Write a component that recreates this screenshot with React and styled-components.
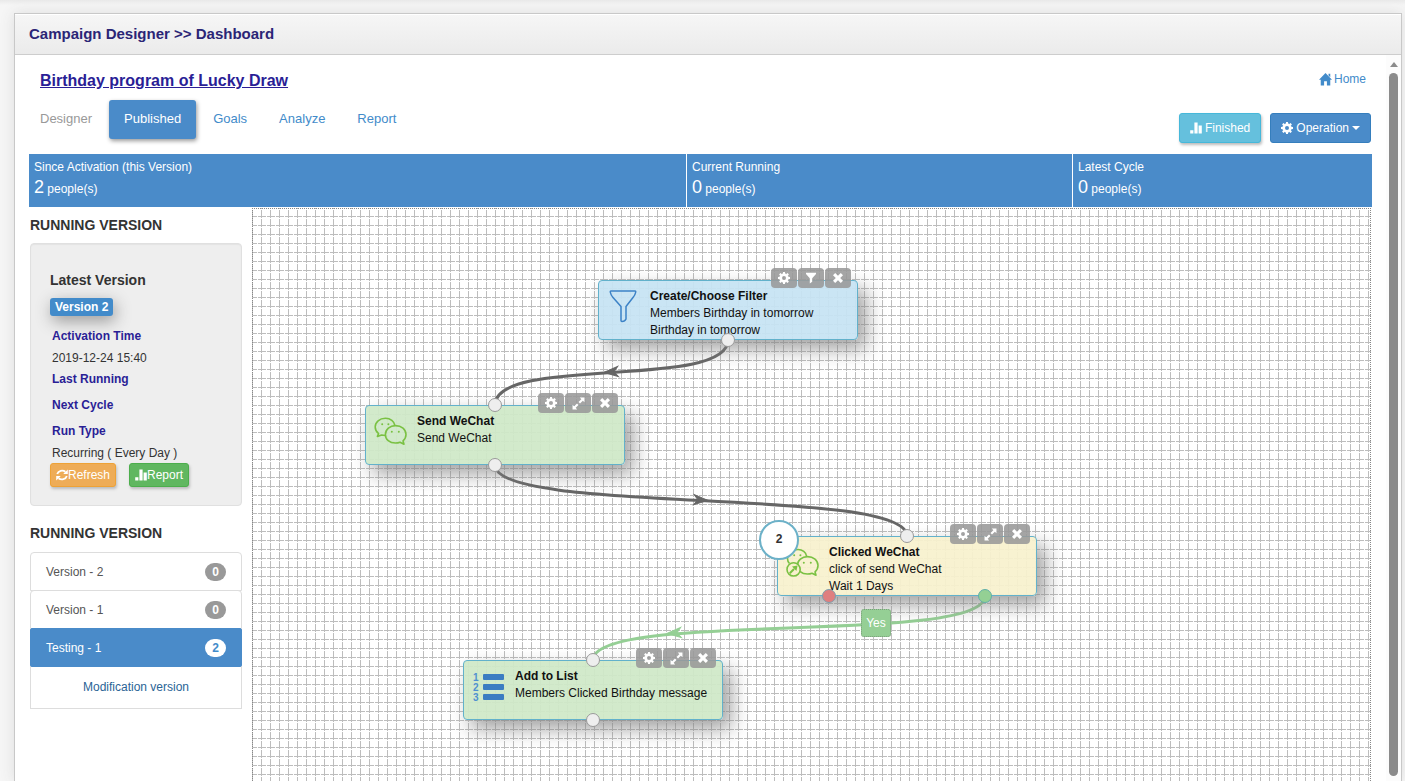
import React, { useState } from 'react';
import styled, { createGlobalStyle, css } from 'styled-components';

const GlobalStyle = createGlobalStyle`
    * { box-sizing: border-box; }
    body {
        margin: 0;
        overflow: hidden;
        background-color: #f3f3f3;
        color: #333;
        font-family: "Liberation Sans", Arial, sans-serif;
        font-size: 12px;
        line-height: 17px;
    }
    button { font-family: inherit; cursor: pointer; }
    a { color: #428bca; text-decoration: none; }
    h1, h2, h3, h4, ul, dl, dd, p { margin: 0; padding: 0; }
`;

const Page = styled.div`
    display: flex;
    height: 100vh;
    padding: 13px 3px 0 14px;
    background: linear-gradient(#e9e9e9, #f6f6f6 5px);
`;

const Panel = styled.div`
    flex: 1;
    display: flex;
    flex-direction: column;
    border: 1px solid #c8c8c8;
    border-bottom: none;
    background-color: white;
    box-shadow: 0 0 14px #ddd;
`;

const PanelHeader = styled.header`
    padding: 10px 14px;
    border-bottom: 1px solid #cdcdcd;
    background: linear-gradient(#f6f6f6, #ebebeb);
    box-shadow: inset 0 1px 0 white;

    h1 {
        font-size: 15px;
        line-height: 20px;
        color: #2b2576;
    }
`;

const PanelBody = styled.div`
    flex: 1;
    display: flex;
    min-height: 0;
`;

const Main = styled.main`
    flex: 1;
    display: flex;
    flex-direction: column;
    min-width: 0;
    padding: 16px 14px 0;
`;

const Scrollbar = styled.div`
    width: 15px;
    display: flex;
    flex-direction: column;
    align-items: center;
    gap: 6px;
    padding: 7px 0 5px;
    background-color: #fcfcfc;
`;

const ScrollArrow = styled.div`
    border: 4px solid transparent;
    border-top: none;
    border-bottom: 5px solid #8b8b8b;
`;

const ScrollThumb = styled.div`
    flex: 1;
    width: 9px;
    border-radius: 5px;
    background-color: #8b8b8b;
`;

const Head = styled.div`
    display: flex;
    justify-content: space-between;
    padding: 0 1px 11px 11px;
`;

const Title = styled.h2`
    font-size: 16px;
    line-height: 20px;
    color: #2a1e96;
    text-decoration: underline;
`;

const Tabs = styled.nav`
    display: flex;
    gap: 2px;
    margin: 9px 0 0 -15px;
`;

const Tab = styled.a`
    padding: 9px 15px 11px;
    border-radius: 3px;
    font-size: 13px;
    line-height: 19px;
    color: ${props => props.$muted ? '#999' : '#428bca'};

    ${props => props.$active && css`
        color: white;
        background-color: #4a8bc9;
        box-shadow: 1px 2px 4px #999;
    `}
`;

const HeadRight = styled.div`
    display: flex;
    flex-direction: column;
    align-items: flex-end;
    gap: 25px;
`;

const HomeLink = styled.a`
    display: flex;
    align-items: center;
    gap: 2px;
    padding-right: 5px;
`;

const ButtonRow = styled.div`
    display: flex;
    gap: ${props => props.$gap};
`;

const buttonColors = {
    info: ['#65c0dd', '#46b8da'],
    primary: ['#4a8bc9', '#357ebd'],
    warning: ['#eeac57', '#eea236'],
    success: ['#60b760', '#4cae4c'],
};

const Button = styled.button`
    display: flex;
    align-items: center;
    gap: ${props => props.$small ? '0' : '3px'};
    padding: ${props => props.$small ? '2px 5px' : '5px 10px'};
    border: 1px solid ${props => buttonColors[props.$kind][1]};
    border-radius: 3px;
    background-color: ${props => buttonColors[props.$kind][0]};
    box-shadow: ${props => props.$raised ? '1px 2px 3px #bbb' : 'none'};
    color: white;
    font-size: 12px;
    line-height: 18px;
`;

const Caret = styled.span`
    border: 4px solid transparent;
    border-top-color: white;
    border-bottom: none;
`;

const Stats = styled.section`
    display: flex;
    gap: 1px;
`;

const Stat = styled.div`
    flex: ${props => props.$share} 1 0;
    padding: 4px 5px;
    background-color: #4a8bc9;
    color: white;

    p { line-height: 18px; }
    p + p { line-height: 27px; }
    strong { font-size: 18px; font-weight: 400; line-height: 18px; }
`;

const Columns = styled.div`
    flex: 1;
    display: flex;
    gap: 10px;
    min-height: 0;
    padding: 1px 1px 0;
`;

const Sidebar = styled.aside`
    width: 212px;
    flex: none;
`;

const SideTitle = styled.h3`
    padding: 9px 0;
    font-size: 14px;
    line-height: 17px;
`;

const Well = styled.div`
    margin-bottom: 10px;
    padding: 27px 19px 18px;
    border: 1px solid #e0e0e0;
    border-radius: 4px;
    background-color: #eee;
    box-shadow: inset 0 1px 1px #e3e3e3;

    h4 { font-size: 14px; line-height: 18px; }
`;

const VersionLabel = styled.span`
    display: inline-block;
    margin: 9px 0 12px;
    padding: 0 5px;
    border-radius: 3px;
    background-color: #428bca;
    box-shadow: 2px 5px 16px #999;
    color: white;
    font-weight: 700;
    line-height: 18px;
`;

const Facts = styled.dl`
    padding-left: 2px;

    dt { margin-bottom: 5px; font-weight: 700; color: #2a1e96; }
    dd { padding-bottom: 4px; }
    dd:last-child { padding-bottom: 1px; }
`;

const VersionList = styled.ul`
    margin-top: 1px;
    list-style: none;
`;

const VersionItem = styled.button`
    display: flex;
    justify-content: space-between;
    align-items: center;
    width: 100%;
    height: 39px;
    margin-bottom: -1px;
    padding: 0 15px;
    border: 1px solid ${props => props.$active ? '#4a8bc9' : '#ddd'};
    border-radius: ${props => props.$active ? '2px' : '4px 4px 0 0'};
    background-color: ${props => props.$active ? '#4a8bc9' : 'white'};
    color: ${props => props.$active ? 'white' : '#555'};
    font-size: 12px;
    position: relative;
    z-index: ${props => props.$active ? 1 : 0};
`;

const Count = styled.span`
    padding: 0 7px;
    border-radius: 9px;
    background-color: ${props => props.$active ? 'white' : '#999'};
    color: ${props => props.$active ? '#428bca' : 'white'};
    font-weight: 700;
    line-height: 18px;
`;

const ListFooter = styled.div`
    padding: 13px 12px 12px;
    border: 1px solid #ddd;
    border-top: none;
    text-align: center;

    a { color: #2a6496; }
`;

const Canvas = styled.section`
    flex: 1;
    position: relative;
    overflow: hidden;
    border: 1px dotted #888;
    border-bottom: none;
    background-image:
        linear-gradient(white 1px, transparent 1px),
        linear-gradient(to right, transparent 4px, white 4px, white 5px, transparent 5px),
        linear-gradient(to right, transparent 8px, #bdbdbd 8px),
        linear-gradient(transparent 7px, #bdbdbd 7px, #bdbdbd 8px, transparent 8px);
    background-size: 9px 9px;
`;

const Wires = styled.svg`
    position: absolute;
    top: 0;
    left: 0;
    width: 100%;
    height: 100%;
`;

const nodeColors = {
    blue: 'rgba(198, 227, 243, 0.93)',
    green: 'rgba(207, 232, 199, 0.93)',
    yellow: 'rgba(248, 241, 206, 0.93)',
};

const Node = styled.article`
    position: absolute;
    left: ${props => props.$x}px;
    top: ${props => props.$y}px;
    display: flex;
    width: 260px;
    height: 60px;
    padding: 7px 8px;
    border: 1px solid #62b1cb;
    border-radius: 4px;
    background-color: ${props => nodeColors[props.$color]};
    box-shadow: 8px 9px 19px rgba(130, 130, 130, 0.75);
    color: #111;
`;

const NodeIcon = styled.div`
    width: 43px;
    flex: none;
`;

const NodeTools = styled.div`
    position: absolute;
    top: -13px;
    right: 6px;
    display: flex;
    gap: 1px;
`;

const ToolButton = styled.button`
    display: flex;
    align-items: center;
    justify-content: center;
    width: 26px;
    height: 20px;
    padding: 0;
    border: none;
    border-radius: 4px;
    background-color: rgba(153, 153, 153, 0.88);
    color: white;
`;

const portColors = {
    plain: ['#eee', '#999'],
    red: ['#df7f7f', '#7e9fae'],
    green: ['#94d094', '#5fb0a8'],
};

const Port = styled.span`
    position: absolute;
    left: ${props => props.$x - 8}px;
    top: ${props => props.$bottom ? 52 : -8}px;
    width: 14px;
    height: 14px;
    border: 1px solid ${props => portColors[props.$kind][1]};
    border-radius: 50%;
    background-color: ${props => portColors[props.$kind][0]};
`;

const Bubble = styled.span`
    position: absolute;
    top: -17px;
    left: -19px;
    width: 40px;
    height: 40px;
    border: 2px solid #6cb1c8;
    border-radius: 50%;
    background-color: white;
    color: #333;
    font-weight: 700;
    line-height: 34px;
    text-align: center;
`;

const WireLabel = styled.span`
    position: absolute;
    left: 608px;
    top: 400px;
    width: 30px;
    height: 28px;
    border: 1px dotted #7a9c7a;
    border-radius: 3px;
    background-color: #95cf95;
    color: white;
    line-height: 26px;
    text-align: center;
`;

const Glyph = ({ size = 12, children }) => (
    <svg width={size} height={size} viewBox="0 0 12 12" fill="currentColor" aria-hidden="true">{children}</svg>
);

const HomeIcon = () => (
    <Glyph size={13}><path d="M6 0 L12 6.2 H10.4 V11.5 H7.3 V7.6 H4.7 V11.5 H1.6 V6.2 H0 Z M8.8 0.6 H10.4 V4 L8.8 2.4 Z" /></Glyph>
);

const StatsIcon = () => (
    <Glyph><path d="M0.2 8.2 H3.4 V11.5 H0.2 Z M4.4 0.5 H7.6 V11.5 H4.4 Z M8.6 3.6 H11.8 V11.5 H8.6 Z" /></Glyph>
);

const CogIcon = () => (
    <Glyph>
        <circle cx="6" cy="6" r="3.3" fill="none" stroke="currentColor" strokeWidth="2.6" />
        {[0, 45, 90, 135].map(angle => (
            <path key={angle} transform={`rotate(${angle} 6 6)`} d="M4.7 2 L5.1 0 H6.9 L7.3 2 Z M4.7 10 L5.1 12 H6.9 L7.3 10 Z" />
        ))}
    </Glyph>
);

const FilterIcon = () => (
    <Glyph><path d="M1 0.8 H11 V2 L7.2 6.2 V9.8 L4.8 11.4 V6.2 L1 2 Z" /></Glyph>
);

const ResizeIcon = () => (
    <Glyph size={13}>
        <path d="M7.2 0.5 H11.5 V4.8 L10 3.4 L7.4 6 L6 4.6 L8.6 2 Z M0.5 7.2 L2 8.6 L4.6 6 L6 7.4 L3.4 10 L4.8 11.5 H0.5 Z" />
    </Glyph>
);

const RemoveIcon = () => (
    <Glyph><path d="M3.2 1 L6 3.8 L8.8 1 L11 3.2 L8.2 6 L11 8.8 L8.8 11 L6 8.2 L3.2 11 L1 8.8 L3.8 6 L1 3.2 Z" /></Glyph>
);

const RefreshIcon = () => (
    <Glyph>
        <path d="M1.2 5 A5 4.6 0 0 1 9.4 2.8 M10.8 7 A5 4.6 0 0 1 2.6 9.2" fill="none" stroke="currentColor" strokeWidth="1.8" />
        <path d="M11.8 0.6 V5 H7.2 Z M0.2 11.4 V7 H4.8 Z" />
    </Glyph>
);

const FunnelDrawing = () => (
    <svg width="32" height="36" viewBox="0 0 32 36" fill="none" stroke="#3c82c6" strokeWidth="1.5" strokeLinejoin="round">
        <path d="M4 3 H28 Q29 3 28.6 4.5 Q28.2 7 26 9.5 L19 18.5 V31 Q18 33.5 15 33.5 Q14 33.5 14 32.5 V18.5 L6 9.5 Q3.8 7 3.4 4.5 Q3 3 4 3 Z" />
    </svg>
);

const WeChatDrawing = ({ clicked }) => (
    <svg width="34" height="34" viewBox="0 0 34 34" fill="none" stroke="#7ac143" strokeWidth="1.6" strokeLinejoin="round">
        {clicked
            ? <path d="M20.5 12 C20 8.5 16.5 5.5 12 5.5 C6 5.5 1.5 9 1.5 14.5 C1.5 16.5 2 18 3.5 19.5" />
            : <path d="M20.8 12.4 C20.3 8.5 16.5 5.3 11.5 5.3 C5.5 5.3 1.2 9 1.2 14 C1.2 17 2.5 19 4.6 20.6 L3.4 23.4 L7.6 22 L11.4 22.5" />}
        <path d="M21.5 12.6 C16 12.6 11.4 16.3 11.4 21.4 C11.4 26.5 15.6 30 21.4 30 C23.2 30 24.6 29.8 26 29.2 L30 31.2 L29 27.8 C31 26.2 32 24 32 21.6 C32 16.5 27.5 12.6 21.5 12.6 Z" />
        <g fill="#7ac143" stroke="none">
            <circle cx="8.2" cy="11.2" r="1" />
            <circle cx="14.4" cy="11.2" r="1" />
            <circle cx="17.8" cy="18.8" r="1" />
            <circle cx="24.8" cy="18.8" r="1" />
        </g>
        {clicked && (
            <g>
                <circle cx="7.6" cy="25.4" r="6.6" fill="#f9f0ce" />
                <path d="M3.8 29.2 L8 25" strokeWidth="2" />
                <path d="M11.6 21.4 L10.4 27 L6 22.6 Z" fill="#7ac143" stroke="none" />
            </g>
        )}
    </svg>
);

const ListDrawing = () => (
    <svg width="34" height="36" viewBox="0 0 34 36" fill="#3b7dc2">
        {[1, 2, 3].map(n => (
            <g key={n}>
                <text x="1" y={n * 10 + 3} fontSize="10" fontWeight="700" fill="#4f90d0">{n}</text>
                <rect x="11" y={n * 10 - 4} width="21" height="6" rx="1" />
            </g>
        ))}
    </svg>
);

const Arrow = ({ x, y, angle, color }) => (
    <path d="M7 0 L-7 -5 L-3 0 L-7 5 Z" fill={color} stroke={color} transform={`translate(${x} ${y}) rotate(${angle})`} />
);

// shares are the widths left after each cell's padding
const stats = [
    { name: 'Since Activation (this Version)', count: 2, share: 647 },
    { name: 'Current Running', count: 0, share: 375 },
    { name: 'Latest Cycle', count: 0, share: 289 },
];

const versions = [
    { name: 'Version - 2', count: 0 },
    { name: 'Version - 1', count: 0 },
    { name: 'Testing - 1', count: 2 },
];

const nodes = [
    {
        x: 345, y: 71, color: 'blue', icon: <FunnelDrawing />, filter: true,
        title: 'Create/Choose Filter', lines: ['Members Birthday in tomorrow', 'Birthday in tomorrow'],
        ports: [{ x: 130, bottom: true, kind: 'plain' }],
    },
    {
        x: 112, y: 196, color: 'green', icon: <WeChatDrawing />,
        title: 'Send WeChat', lines: ['Send WeChat'],
        ports: [{ x: 130, kind: 'plain' }, { x: 130, bottom: true, kind: 'plain' }],
    },
    {
        x: 524, y: 327, color: 'yellow', icon: <WeChatDrawing clicked />, bubble: 2,
        title: 'Clicked WeChat', lines: ['click of send WeChat', 'Wait 1 Days'],
        ports: [{ x: 130, kind: 'plain' }, { x: 52, bottom: true, kind: 'red' }, { x: 208, bottom: true, kind: 'green' }],
    },
    {
        x: 210, y: 451, color: 'green', icon: <ListDrawing />,
        title: 'Add to List', lines: ['Members Clicked Birthday message'],
        ports: [{ x: 130, kind: 'plain' }, { x: 130, bottom: true, kind: 'plain' }],
    },
];

const CampaignNode = ({ node }) => (
    <Node $x={node.x} $y={node.y} $color={node.color}>
        <NodeIcon>{node.icon}</NodeIcon>
        <div>
            <strong>{node.title}</strong>
            {node.lines.map(line => <p key={line}>{line}</p>)}
        </div>
        <NodeTools>
            <ToolButton aria-label="Settings"><CogIcon /></ToolButton>
            <ToolButton aria-label={node.filter ? 'Filter' : 'Expand'}>
                {node.filter ? <FilterIcon /> : <ResizeIcon />}
            </ToolButton>
            <ToolButton aria-label="Remove"><RemoveIcon /></ToolButton>
        </NodeTools>
        {node.ports.map((port, i) => (
            <Port key={i} $x={port.x} $bottom={port.bottom} $kind={port.kind} />
        ))}
        {node.bubble && <Bubble>{node.bubble}</Bubble>}
    </Node>
);

const App = () => {
    const [selected, setSelected] = useState('Testing - 1');

    return (
        <Page>
            <GlobalStyle />
            <Panel>
                <PanelHeader><h1>Campaign Designer &gt;&gt; Dashboard</h1></PanelHeader>
                <PanelBody>
                    <Main>
                        <Head>
                            <div>
                                <Title>Birthday program of Lucky Draw</Title>
                                <Tabs>
                                    <Tab href="#designer" $muted>Designer</Tab>
                                    <Tab href="#published" $active>Published</Tab>
                                    <Tab href="#goals">Goals</Tab>
                                    <Tab href="#analyze">Analyze</Tab>
                                    <Tab href="#report">Report</Tab>
                                </Tabs>
                            </div>
                            <HeadRight>
                                <HomeLink href="#home"><HomeIcon />Home</HomeLink>
                                <ButtonRow $gap="9px">
                                    <Button $kind="info" $raised><StatsIcon />Finished</Button>
                                    <Button $kind="primary"><CogIcon />Operation<Caret /></Button>
                                </ButtonRow>
                            </HeadRight>
                        </Head>

                        <Stats>
                            {stats.map(stat => (
                                <Stat key={stat.name} $share={stat.share}>
                                    <p>{stat.name}</p>
                                    <p><strong>{stat.count}</strong> people(s)</p>
                                </Stat>
                            ))}
                        </Stats>

                        <Columns>
                            <Sidebar>
                                <SideTitle>RUNNING VERSION</SideTitle>
                                <Well>
                                    <h4>Latest Version</h4>
                                    <VersionLabel>Version 2</VersionLabel>
                                    <Facts>
                                        <dt>Activation Time</dt>
                                        <dd>2019-12-24 15:40</dd>
                                        <dt>Last Running</dt>
                                        <dd />
                                        <dt>Next Cycle</dt>
                                        <dd />
                                        <dt>Run Type</dt>
                                        <dd>Recurring ( Every Day )</dd>
                                    </Facts>
                                    <ButtonRow $gap="13px">
                                        <Button $kind="warning" $small $raised><RefreshIcon />Refresh</Button>
                                        <Button $kind="success" $small $raised><StatsIcon />Report</Button>
                                    </ButtonRow>
                                </Well>

                                <SideTitle>RUNNING VERSION</SideTitle>
                                <VersionList>
                                    {versions.map(({ name, count }) => (
                                        <li key={name}>
                                            <VersionItem $active={name === selected} onClick={() => setSelected(name)}>
                                                {name}
                                                <Count $active={name === selected}>{count}</Count>
                                            </VersionItem>
                                        </li>
                                    ))}
                                </VersionList>
                                <ListFooter><a href="#modification">Modification version</a></ListFooter>
                            </Sidebar>

                            <Canvas>
                                <Wires fill="none" strokeWidth="3">
                                    <path d="M475 131 C475 181 242 146 242 196" stroke="#666" />
                                    <path d="M242 256 C242 306 654 277 654 327" stroke="#666" />
                                    <path d="M732 387 C732 437 340 401 340 451" stroke="#95cf95" />
                                    <g strokeWidth="1">
                                        <Arrow x={358} y={163} angle={176} color="#666" />
                                        <Arrow x={448} y={291} angle={3} color="#666" />
                                        <Arrow x={421} y={424} angle={176} color="#95cf95" />
                                    </g>
                                </Wires>
                                {nodes.map(node => <CampaignNode key={node.title} node={node} />)}
                                <WireLabel>Yes</WireLabel>
                            </Canvas>
                        </Columns>
                    </Main>
                    <Scrollbar>
                        <ScrollArrow />
                        <ScrollThumb />
                    </Scrollbar>
                </PanelBody>
            </Panel>
        </Page>
    );
};

export default App;
